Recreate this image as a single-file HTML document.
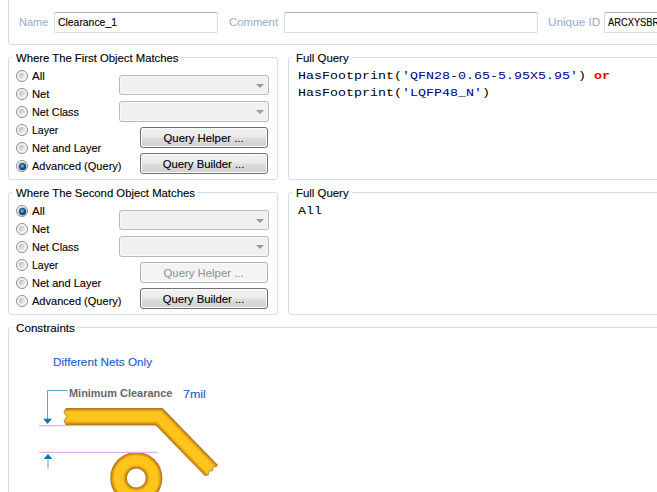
<!DOCTYPE html>
<html><head><meta charset="utf-8">
<style>
html,body{margin:0;padding:0;background:#fff;}
body{width:657px;height:492px;overflow:hidden;position:relative;font-family:"Liberation Sans",sans-serif;font-size:11.5px;color:#000;}
.abs{position:absolute;}
.gb{position:absolute;border:1px solid #d5dfe5;border-radius:3px;box-sizing:border-box;}
.gl{position:absolute;background:#fff;padding:0 2px 0 4px;font-size:11.5px;line-height:14px;white-space:nowrap;}
.lbl{position:absolute;font-size:11.5px;line-height:14px;color:#9fb0d0;white-space:nowrap;}
.inp{position:absolute;box-sizing:border-box;border:1px solid #d9dde2;border-top-color:#abadb3;border-radius:2px;background:#fff;font-size:11.5px;line-height:19px;padding-left:3px;white-space:nowrap;overflow:hidden;}
.rb{position:absolute;width:12px;height:12px;box-sizing:border-box;border:1px solid #8a8c8e;border-radius:50%;background:radial-gradient(circle closest-side at 50% 50%,rgba(255,255,255,0) 0,rgba(255,255,255,0) 58%,#f6f6f6 72%,#f6f6f6 100%),linear-gradient(135deg,#b4bac0 20%,#f0f1f2 75%);}
.rb.on::after{content:"";position:absolute;left:1.5px;top:1.5px;width:7px;height:7px;border-radius:50%;background:radial-gradient(circle at 45% 42%,#7fdcfa 0,#2b98d6 22%,#14467c 50%,#0b2548 75%,#0b2548 100%);box-shadow:0 0 0 0.7px #a4a8ac;}
.rt{position:absolute;font-size:11.5px;line-height:14px;white-space:nowrap;}
.cb{position:absolute;box-sizing:border-box;border:1px solid #b8b8b8;border-radius:3px;background:#f0f0f0;box-shadow:inset 0 0 0 1px #f8f8f8;}
.cb::after{content:"";position:absolute;right:4px;top:8px;border-left:4px solid transparent;border-right:4px solid transparent;border-top:4px solid #9a9a9a;}
.btn{position:absolute;box-sizing:border-box;border:1px solid #707070;border-radius:3px;background:linear-gradient(#f2f2f2 0,#ebebeb 48%,#dddddd 52%,#cfcfcf 100%);box-shadow:inset 0 0 0 1px #fcfcfc;font-size:11.5px;line-height:20px;text-align:center;white-space:nowrap;}
.btn.dis{border-color:#adb2b5;background:#f4f4f4;color:#959595;}
.mono{position:absolute;transform-origin:0 12px;transform:scaleY(0.88);font-family:"Liberation Mono",monospace;font-size:13.333px;line-height:17px;white-space:pre;color:#000;}
.sx{-webkit-text-stroke:0.12px currentColor;display:inline-block;transform-origin:0 50%;white-space:nowrap;}
.btn .sx{transform-origin:50% 50%;}
.nv{color:#000080;}
.rd{color:#f00000;font-weight:bold;}
</style></head><body>

<!-- top box -->
<div class="gb" style="left:8px;top:-10px;width:700px;height:55px;"></div>
<div class="lbl" style="left:19px;top:15px;"><span class="sx" style="transform:scaleX(0.956)">Name</span></div>
<div class="inp" style="left:54px;top:12px;width:164px;height:21px;"><span class="sx" style="transform:scaleX(0.904)">Clearance_1</span></div>
<div class="lbl" style="left:229px;top:15px;"><span class="sx" style="transform:scaleX(0.984)">Comment</span></div>
<div class="inp" style="left:284px;top:12px;width:254px;height:21px;"></div>
<div class="lbl" style="left:548px;top:15px;"><span class="sx" style="transform:scaleX(1.021)">Unique ID</span></div>
<div class="inp" style="left:604px;top:12px;width:80px;height:21px;"><span class="sx" style="transform:scaleX(0.810)">ARCXYSBR</span></div>

<!-- first object -->
<div class="gb" style="left:8px;top:57px;width:270px;height:123px;"></div>
<div class="gl" style="left:12px;top:51px;width:163px;"><span class="sx" style="transform:scaleX(0.983)">Where The First Object Matches</span></div>
<div class="rb" style="left:16px;top:70px;"></div><div class="rt" style="left:32px;top:69px;"><span class="sx" style="transform:scaleX(1.002)">All</span></div>
<div class="rb" style="left:16px;top:88px;"></div><div class="rt" style="left:32px;top:87px;"><span class="sx" style="transform:scaleX(0.977)">Net</span></div>
<div class="rb" style="left:16px;top:106px;"></div><div class="rt" style="left:32px;top:105px;"><span class="sx" style="transform:scaleX(0.941)">Net Class</span></div>
<div class="rb" style="left:16px;top:124px;"></div><div class="rt" style="left:32px;top:123px;"><span class="sx" style="transform:scaleX(0.917)">Layer</span></div>
<div class="rb" style="left:16px;top:142px;"></div><div class="rt" style="left:32px;top:141px;"><span class="sx" style="transform:scaleX(0.958)">Net and Layer</span></div>
<div class="rb on" style="left:16px;top:160px;"></div><div class="rt" style="left:32px;top:159px;"><span class="sx" style="transform:scaleX(0.959)">Advanced (Query)</span></div>
<div class="cb" style="left:119px;top:75px;width:150px;height:20px;"></div>
<div class="cb" style="left:119px;top:101px;width:150px;height:21px;"></div>
<div class="btn" style="left:140px;top:127px;width:128px;height:21px;"><span class="sx" style="transform:scaleX(0.987)">Query Helper ...</span></div>
<div class="btn" style="left:140px;top:153px;width:128px;height:21px;"><span class="sx" style="transform:scaleX(0.983)">Query Builder ...</span></div>

<!-- full query 1 -->
<div class="gb" style="left:288px;top:57px;width:420px;height:123px;"></div>
<div class="gl" style="left:292px;top:51px;width:54px;"><span class="sx" style="transform:scaleX(0.992)">Full Query</span></div>
<div class="mono" style="left:298px;top:67px;">HasFootprint(<span class="nv">'QFN28-0.65-5.95X5.95'</span>) <span class="rd">or</span></div>
<div class="mono" style="left:298px;top:84px;">HasFootprint(<span class="nv">'LQFP48_N'</span>)</div>

<!-- second object -->
<div class="gb" style="left:8px;top:192px;width:270px;height:123px;"></div>
<div class="gl" style="left:12px;top:186px;width:179px;"><span class="sx" style="transform:scaleX(0.983)">Where The Second Object Matches</span></div>
<div class="rb on" style="left:16px;top:205px;"></div><div class="rt" style="left:32px;top:204px;"><span class="sx" style="transform:scaleX(1.002)">All</span></div>
<div class="rb" style="left:16px;top:223px;"></div><div class="rt" style="left:32px;top:222px;"><span class="sx" style="transform:scaleX(0.977)">Net</span></div>
<div class="rb" style="left:16px;top:241px;"></div><div class="rt" style="left:32px;top:240px;"><span class="sx" style="transform:scaleX(0.941)">Net Class</span></div>
<div class="rb" style="left:16px;top:259px;"></div><div class="rt" style="left:32px;top:258px;"><span class="sx" style="transform:scaleX(0.917)">Layer</span></div>
<div class="rb" style="left:16px;top:277px;"></div><div class="rt" style="left:32px;top:276px;"><span class="sx" style="transform:scaleX(0.958)">Net and Layer</span></div>
<div class="rb" style="left:16px;top:295px;"></div><div class="rt" style="left:32px;top:294px;"><span class="sx" style="transform:scaleX(0.959)">Advanced (Query)</span></div>
<div class="cb" style="left:119px;top:210px;width:150px;height:20px;"></div>
<div class="cb" style="left:119px;top:236px;width:150px;height:21px;"></div>
<div class="btn dis" style="left:140px;top:262px;width:128px;height:21px;"><span class="sx" style="transform:scaleX(0.987)">Query Helper ...</span></div>
<div class="btn" style="left:140px;top:288px;width:128px;height:21px;"><span class="sx" style="transform:scaleX(0.983)">Query Builder ...</span></div>

<!-- full query 2 -->
<div class="gb" style="left:288px;top:192px;width:420px;height:123px;"></div>
<div class="gl" style="left:292px;top:186px;width:54px;"><span class="sx" style="transform:scaleX(0.992)">Full Query</span></div>
<div class="mono" style="left:298px;top:202px;">All</div>

<!-- constraints -->
<div class="gb" style="left:8px;top:327px;width:700px;height:220px;"></div>
<div class="gl" style="left:12px;top:321px;width:59px;"><span class="sx" style="transform:scaleX(1.013)">Constraints</span></div>
<div class="rt" style="left:53px;top:355px;color:#1860cc;"><span class="sx" style="transform:scaleX(1.022)">Different Nets Only</span></div>
<div class="rt" style="left:69px;top:386px;color:#62676f;font-weight:bold;"><span class="sx" style="-webkit-text-stroke:0;transform:scaleX(0.951)">Minimum Clearance</span></div>
<div class="rt" style="left:183px;top:387px;color:#1860cc;"><span class="sx" style="transform:scaleX(1.085)">7mil</span></div>

<svg class="abs" style="left:0;top:380px;" width="260" height="112" viewBox="0 380 260 112">
<line x1="39" y1="425.6" x2="157.5" y2="425.6" stroke="#dab6e6" stroke-width="1.1"/>
<g>
<polyline points="62,416.6 159,416.6 213,472.2" fill="none" stroke="#a67a2a" stroke-width="17" stroke-linejoin="miter"/>
<polyline points="62,416.6 159,416.6 213,472.2" fill="none" stroke="#bf8412" stroke-width="15.6" stroke-linejoin="miter"/>
<polyline points="62,416.6 159,416.6 213,472.2" fill="none" stroke="#d4900e" stroke-width="14.4" stroke-linejoin="miter"/>
<polyline points="62,416.6 159,416.6 213,472.2" fill="none" stroke="#e39e10" stroke-width="13.2" stroke-linejoin="miter"/>
<polyline points="62,416.6 159,416.6 213,472.2" fill="none" stroke="#efab14" stroke-width="12" stroke-linejoin="miter"/>
<polyline points="62,416.6 159,416.6 213,472.2" fill="none" stroke="#f8b718" stroke-width="10.8" stroke-linejoin="miter"/>
<polyline points="62,416.6 159,416.6 213,472.2" fill="none" stroke="#fdc01b" stroke-width="9.6" stroke-linejoin="miter"/>
<polyline points="62,416.6 159,416.6 213,472.2" fill="none" stroke="#ffc51d" stroke-width="8.4" stroke-linejoin="miter"/>
</g>
<!-- wavy end masks -->
<path d="M58,405 L66.2,405 L66.2,408 L64,412.3 L66.8,416.6 L64,420.9 L66.2,425.2 L66.2,428 L58,428 Z" fill="#fff"/>
<path d="M218.3,462.4 L216.7,466.6 L212.9,466.9 L212.6,470.7 L208.9,470.9 L208.5,474.7 L205.1,475.7 L201,480 L214,492 L230,470 Z" fill="#fff"/>
<line x1="39" y1="425.6" x2="66.3" y2="425.6" stroke="#dab6e6" stroke-width="1.1"/>
<polyline points="66.2,408.2 64,412.3 66.8,416.6 64,420.9 66.2,425" fill="none" stroke="#a67a2a" stroke-width="1" stroke-opacity="0.85"/>
<polyline points="217.3,463.8 216.7,466.6 212.9,466.9 212.6,470.7 208.9,470.9 208.5,474.7 205.6,475.5" fill="none" stroke="#a67a2a" stroke-width="1" stroke-opacity="0.85"/>
<circle cx="136.3" cy="478" r="17.75" fill="none" stroke="#a67a2a" stroke-width="16.6"/>
<circle cx="136.3" cy="478" r="17.75" fill="none" stroke="#bf8412" stroke-width="15.2"/>
<circle cx="136.3" cy="478" r="17.75" fill="none" stroke="#d4900e" stroke-width="14"/>
<circle cx="136.3" cy="478" r="17.75" fill="none" stroke="#e39e10" stroke-width="12.8"/>
<circle cx="136.3" cy="478" r="17.75" fill="none" stroke="#efab14" stroke-width="11.6"/>
<circle cx="136.3" cy="478" r="17.75" fill="none" stroke="#f8b718" stroke-width="10.4"/>
<circle cx="136.3" cy="478" r="17.75" fill="none" stroke="#fdc01b" stroke-width="9.2"/>
<circle cx="136.3" cy="478" r="17.75" fill="none" stroke="#ffc51d" stroke-width="8"/>

<line x1="39" y1="452.4" x2="158" y2="452.4" stroke="#dab6e6" stroke-width="1.1"/>
<polyline points="67.5,390.5 47.5,390.5 47.5,419" fill="none" stroke="#55a8d1" stroke-width="1"/>
<polygon points="43,418.8 52,418.8 47.5,424" fill="#0f76b6"/>
<polygon points="43.6,459 52.4,459 48,454" fill="#0f76b6"/>
<line x1="48" y1="459" x2="48" y2="468.7" stroke="#a9d3ea" stroke-width="2"/>
</svg>
</body></html>
